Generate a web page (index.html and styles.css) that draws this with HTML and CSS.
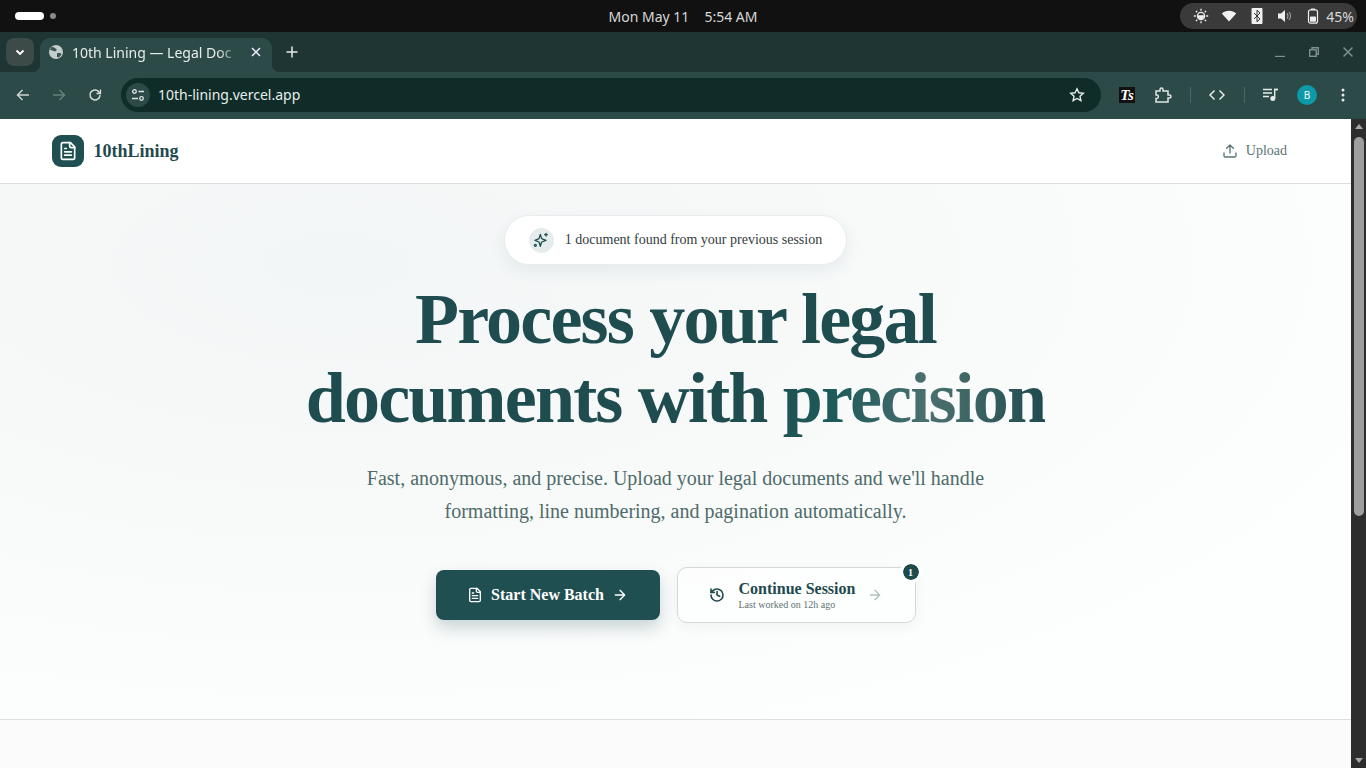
FILE: index.html
```html
<!DOCTYPE html>
<html lang="en">
<head>
  <meta charset="UTF-8">
  <title>10th Lining — Legal Documents</title>
  <link rel="stylesheet" href="styles.css">
</head>
<body>
  <!-- Desktop top bar -->
  <div class="os-bar">
    <div class="workspaces">
      <span class="ws-active"></span>
      <span class="ws-dot"></span>
    </div>
    <div class="clock"><span>Mon May 11</span><span>5:54 AM</span></div>
    <div class="tray">
      <svg class="tray-icon" viewBox="0 0 16 16" fill="none" stroke="#eee" stroke-width="1.3"><circle cx="8" cy="8" r="3.6"/><path d="M5.5 8a2.5 2.5 0 0 0 5 0z" fill="#eee"/><path d="M8 .8v2M8 13.2v2M.8 8h2M13.2 8h2M2.9 2.9l1.4 1.4M11.7 11.7l1.4 1.4M2.9 13.100l1.4-1.400M11.700 4.300l1.400-1.400"/></svg>
      <svg class="tray-icon" viewBox="0 0 16 16"><path d="M.8 5.500C2.800 3.700 5.200 2.800 8 2.800s5.200.9 7.200 2.700L8 13.500z" fill="#f2f2f2"/></svg>
      <svg class="tray-icon" viewBox="0 0 12 16"><rect x=".5" width="11" height="16" rx="1" fill="#f2f2f2"/><path d="M3 5l6 6-3 2.800V2.200L9 5l-6 6" fill="none" stroke="#333" stroke-width="1"/></svg>
      <svg class="tray-icon" viewBox="0 0 16 16"><path d="M1 5.500h3L8 2v12l-4-3.500H1z" fill="#eee"/><path d="M10 5.500a3.500 3.500 0 0 1 0 5M12 4a6 6 0 0 1 0 8" fill="none" stroke="#aaa" stroke-width="1.100"/></svg>
      <svg class="tray-icon" viewBox="0 0 12 16"><rect x="1.500" y="1.800" width="9" height="13.400" rx="2" fill="none" stroke="#eee" stroke-width="1.200"/><rect x="4" y=".5" width="4" height="1.500" fill="#eee"/><rect x="3" y="8.500" width="6" height="5.300" rx=".8" fill="#eee"/></svg>
      <span class="battery">45%</span>
    </div>
  </div>

  <!-- Browser tabs -->
  <div class="tab-strip">
    <div class="tab-search">
      <svg width="12" height="12" viewBox="0 0 12 12" fill="none" stroke="#fff" stroke-width="1.800"><path d="M2.500 4.500L6 8l3.500-3.500"/></svg>
    </div>
    <div class="tab">
      <svg width="16" height="16" viewBox="0 0 16 16"><circle cx="8" cy="8" r="7" fill="#c4cecc"/><path d="M4 2.500l3 1.500 2 2-2 1.500-3-1-2-1zM9 9l3.500 0 1 1.500L11 13.500 9 13z" fill="#3a5553"/></svg>
      <span class="tab-title">10th Lining — Legal Doc</span>
      <svg class="tab-close" width="10" height="10" viewBox="0 0 10 10" stroke="#eef" stroke-width="1.500"><path d="M1 1l8 8M9 1l-8 8"/></svg>
    </div>
    <svg class="new-tab" width="12" height="12" viewBox="0 0 12 12" stroke="#e6ecea" stroke-width="1.500"><path d="M6 .5v11M.5 6h11"/></svg>
    <div class="window-controls">
      <svg width="10" height="10" viewBox="0 0 10 10" stroke="#7d918f" stroke-width="1.400"><path d="M0 9.500h10"/></svg>
      <svg width="10" height="10" viewBox="0 0 10 10" fill="none" stroke="#7d918f" stroke-width="1.400"><rect x=".7" y="2.800" width="6.500" height="6.500"/><path d="M3 2.800V.7h6.300v6.500H7.200"/></svg>
      <svg width="10" height="10" viewBox="0 0 10 10" stroke="#7d918f" stroke-width="1.500"><path d="M.5.5l9 9M9.500.5l-9 9"/></svg>
    </div>
  </div>

  <!-- Browser toolbar -->
  <div class="toolbar">
    <div class="nav-buttons">
      <svg width="14" height="14" viewBox="0 0 14 14" fill="none" stroke="#c9d3d1" stroke-width="1.500"><path d="M13 7H1.500M6.500 2l-5 5 5 5"/></svg>
      <svg width="14" height="14" viewBox="0 0 14 14" fill="none" stroke="#64807c" stroke-width="1.500"><path d="M1 7h11.500M7.500 2l5 5-5 5"/></svg>
      <svg width="14" height="14" viewBox="0 0 14 14" fill="none" stroke="#d5dedc" stroke-width="1.500"><path d="M12 7a5 5 0 1 1-1.500-3.600L12 5"/><path d="M12.500 1.500v4h-4" stroke-width="1.300"/></svg>
    </div>
    <div class="omnibox">
      <span class="site-info">
        <svg width="14" height="14" viewBox="0 0 14 14" fill="none" stroke="#dfe6e4" stroke-width="1.300"><circle cx="3.500" cy="3.500" r="1.800"/><path d="M7.500 3.500H13M1 10.500h6"/><circle cx="10.500" cy="10.500" r="1.800"/></svg>
      </span>
      <span class="url">10th-lining.vercel.app</span>
      <svg class="star" width="16" height="16" viewBox="0 0 16 16" fill="none" stroke="#e6ecea" stroke-width="1.400"><path d="M8 1.800l1.900 4 4.400.5-3.300 3 .9 4.400L8 11.500l-3.900 2.200.9-4.400-3.300-3 4.400-.5z"/></svg>
    </div>
    <div class="ext-buttons">
      <span class="tool-slot"><span class="ts-badge">Ts</span></span>
      <span class="tool-slot">
        <svg width="18" height="18" viewBox="0 0 18 18" fill="none" stroke="#dfe6e4" stroke-width="1.500"><path d="M2 5h4V3.500a1.500 1.500 0 0 1 3 0V5h5v4h1.500a1.500 1.500 0 0 1 0 3H14v4H2v-3.500h1a1.800 1.800 0 0 0 0-3.500H2z"/></svg>
      </span>
      <span class="tool-sep"></span>
      <span class="tool-slot">
        <svg width="16" height="12" viewBox="0 0 16 12" fill="none" stroke="#e6ecea" stroke-width="1.500"><path d="M5.500 1.500L1 6l4.500 4.500M10.500 1.500L15 6l-4.500 4.500"/></svg>
      </span>
      <span class="tool-sep"></span>
      <span class="tool-slot">
        <svg width="16" height="14" viewBox="0 0 16 14"><path d="M0 1.500h9M0 5h9M0 8.500h6" stroke="#e6ecea" stroke-width="1.400"/><path d="M11 1.500h4" stroke="#e6ecea" stroke-width="1.800"/><path d="M11.700 1v9" stroke="#e6ecea" stroke-width="1.400"/><circle cx="9.800" cy="10.500" r="2.500" fill="#e6ecea"/></svg>
      </span>
      <span class="tool-slot"><span class="avatar">B</span></span>
      <span class="tool-slot">
        <svg width="4" height="14" viewBox="0 0 4 14" fill="#e6ecea"><circle cx="2" cy="2" r="1.500"/><circle cx="2" cy="7" r="1.500"/><circle cx="2" cy="12" r="1.500"/></svg>
      </span>
    </div>
  </div>

  <!-- Page -->
  <div class="viewport">
    <div class="page">
      <header class="site-header">
        <a class="brand">
          <span class="brand-mark">
            <svg width="20" height="20" viewBox="0 0 24 24" fill="none" stroke="#fff" stroke-width="2" stroke-linecap="round" stroke-linejoin="round"><path d="M15 2H6a2 2 0 0 0-2 2v16a2 2 0 0 0 2 2h12a2 2 0 0 0 2-2V7z"/><path d="M14 2v4a2 2 0 0 0 2 2h4M16 13H8M16 17H8M10 9H8"/></svg>
          </span>
          <span class="brand-name">10thLining</span>
        </a>
        <a class="upload-link">
          <svg width="16" height="16" viewBox="0 0 24 24" fill="none" stroke="currentColor" stroke-width="2" stroke-linecap="round" stroke-linejoin="round"><path d="M21 15v4a2 2 0 0 1-2 2H5a2 2 0 0 1-2-2v-4M17 8l-5-5-5 5M12 3v12"/></svg>
          Upload
        </a>
      </header>

      <section class="hero">
        <div class="session-pill">
          <span class="pill-icon">
            <svg width="16" height="16" viewBox="0 0 24 24" fill="none" stroke="#1f4f50" stroke-width="2" stroke-linecap="round" stroke-linejoin="round"><path d="M11 3.500l2 6.500 6.500 2.500-6.500 2.500-2 6.500-2-6.500-6-2.500 6-2.500z"/><path d="M19.500 2v4M17.500 4h4"/><circle cx="3.500" cy="20" r="1.500"/></svg>
          </span>
          1 document found from your previous session
        </div>

        <h1>Process your legal<br>documents with <span class="shimmer">precision</span></h1>

        <p class="lede">Fast, anonymous, and precise. Upload your legal documents and we'll handle<br>formatting, line numbering, and pagination automatically.</p>

        <div class="hero-actions">
          <button class="btn-primary">
            <svg width="16" height="16" viewBox="0 0 24 24" fill="none" stroke="#fff" stroke-width="2" stroke-linecap="round" stroke-linejoin="round"><path d="M15 2H6a2 2 0 0 0-2 2v16a2 2 0 0 0 2 2h12a2 2 0 0 0 2-2V7z"/><path d="M14 2v4a2 2 0 0 0 2 2h4M16 13H8M16 17H8M10 9H8"/></svg>
            Start New Batch
            <svg width="16" height="16" viewBox="0 0 24 24" fill="none" stroke="#fff" stroke-width="2" stroke-linecap="round" stroke-linejoin="round"><path d="M5 12h14M12 5l7 7-7 7"/></svg>
          </button>
          <button class="btn-session">
            <svg width="16" height="16" viewBox="0 0 24 24" fill="none" stroke="#1f4a4d" stroke-width="2.400" stroke-linecap="round" stroke-linejoin="round"><path d="M3 12a9 9 0 1 0 9-9 9.700 9.700 0 0 0-6.700 2.700L3 8"/><path d="M3 3v5h5M12 7v5l4 2"/></svg>
            <span class="session-text">
              <strong>Continue Session</strong>
              <small>Last worked on 12h ago</small>
            </span>
            <svg class="session-arrow" width="16" height="16" viewBox="0 0 24 24" fill="none" stroke="#b4bfbe" stroke-width="2" stroke-linecap="round" stroke-linejoin="round"><path d="M5 12h14M12 5l7 7-7 7"/></svg>
            <span class="count-badge">1</span>
          </button>
        </div>
      </section>

      <div class="below-fold"></div>
    </div>

    <div class="scrollbar">
      <span class="scroll-up"></span>
      <span class="scroll-track"><span class="scroll-thumb"></span></span>
      <span class="scroll-down"></span>
    </div>
  </div>
</body>
</html>
```

FILE: styles.css
```css
/* Base */
html, body {
  height: 100%;
  margin: 0;
  padding: 0;
}

body {
  display: flex;
  flex-direction: column;
  overflow: hidden;
  font-family: "Noto Sans", sans-serif;
  background: #fff;
}

/* Desktop top bar */
.os-bar {
  height: 32px;
  flex: none;
  display: grid;
  grid-template-columns: 1fr auto 1fr;
  align-items: center;
  background: #111111;
  color: #d8d8d8;
  font-size: 14px;
}

.workspaces {
  display: flex;
  align-items: center;
  gap: 6px;
  padding-left: 15px;
}

.ws-active {
  width: 29px;
  height: 8px;
  border-radius: 4px;
  background: #fff;
}

.ws-dot {
  width: 6px;
  height: 6px;
  border-radius: 50%;
  background: #8a8a8a;
}

.clock {
  display: flex;
  gap: 15px;
}

.tray {
  justify-self: end;
  height: 26px;
  margin-right: 9px;
  padding: 0 3px 0 13px;
  display: flex;
  align-items: center;
  gap: 12px;
  border-radius: 13px;
  background: #3a3a3a;
}

.tray-icon {
  height: 16px;
  width: 16px;
}

.battery {
  margin-left: -7px;
  color: #d8d8d8;
  font-size: 14px;
}

/* Tab strip */
.tab-strip {
  height: 40px;
  flex: none;
  display: flex;
  align-items: flex-end;
  background: #1f3533;
  color: #e6ecea;
}

.tab-search {
  width: 28px;
  height: 28px;
  margin: 0 6px 6px 6px;
  display: flex;
  align-items: center;
  justify-content: center;
  border-radius: 8px;
  background: #3c4a48;
}

.tab {
  position: relative;
  width: 232px;
  height: 34px;
  box-sizing: border-box;
  padding: 0 9px 6px 8px;
  display: flex;
  align-items: center;
  gap: 8px;
  border-radius: 10px 10px 0 0;
  background: #2c4a47;
  font-size: 14px;
}

.tab::before,
.tab::after {
  content: "";
  position: absolute;
  bottom: 0;
  width: 8px;
  height: 8px;
}

.tab::before {
  left: -8px;
  background: radial-gradient(circle at 0 0, transparent 8px, #2c4a47 8.5px);
}

.tab::after {
  right: -8px;
  background: radial-gradient(circle at 100% 0, transparent 8px, #2c4a47 8.5px);
}

.tab-title {
  flex: 1;
  overflow: hidden;
  white-space: nowrap;
  -webkit-mask-image: linear-gradient(to right, #000 85%, transparent);
  mask-image: linear-gradient(to right, #000 85%, transparent);
}

.tab-close {
  margin-right: 2px;
}

.new-tab {
  margin: 0 0 14px 14px;
}

.window-controls {
  margin-left: auto;
  padding: 0 13px 15px 0;
  display: flex;
  align-items: center;
  gap: 24px;
}

/* Toolbar */
.toolbar {
  height: 47px;
  flex: none;
  box-sizing: border-box;
  padding-bottom: 1px;
  display: flex;
  align-items: center;
  background: #2c4a47;
}

.nav-buttons {
  display: flex;
  align-items: center;
  gap: 22px;
  padding-left: 16px;
  width: 105px;
  box-sizing: border-box;
}

.omnibox {
  width: 980px;
  height: 34px;
  box-sizing: border-box;
  margin-left: 16px;
  padding: 0 16px 0 5px;
  display: flex;
  align-items: center;
  border-radius: 17px;
  background: #102c29;
  color: #e6ecea;
  font-size: 14px;
}

.site-info {
  width: 24px;
  height: 24px;
  display: flex;
  align-items: center;
  justify-content: center;
  border-radius: 50%;
  background: #2c4a47;
}

.url {
  margin-left: 8px;
  padding-bottom: 2px;
}

.star {
  margin-left: auto;
}

.ext-buttons {
  flex: 1;
  display: flex;
  align-items: center;
  padding-left: 8px;
}

.tool-slot {
  width: 36px;
  display: flex;
  align-items: center;
  justify-content: center;
}

.ts-badge {
  width: 16px;
  height: 16px;
  display: flex;
  align-items: center;
  justify-content: center;
  background: #111;
  color: #fff;
  font: italic 700 15px "Liberation Serif", serif;
}

.tool-sep {
  width: 1px;
  height: 16px;
  margin: 0 8px 0 9px;
  background: #4c6663;
}

.avatar {
  width: 20px;
  height: 20px;
  display: flex;
  align-items: center;
  justify-content: center;
  border-radius: 50%;
  background: #0d9aa8;
  color: #fff;
  font-size: 10px;
}

/* Page viewport */
.viewport {
  flex: 1;
  min-height: 0;
  display: flex;
}

.page {
  flex: 1;
  min-width: 0;
  display: flex;
  flex-direction: column;
  font-family: "Liberation Serif", serif;
  color: #1f4a4d;
}

.site-header {
  height: 64px;
  flex: none;
  box-sizing: content-box;
  padding: 0 64px 0 52px;
  display: flex;
  align-items: center;
  justify-content: space-between;
  background: #fff;
  border-bottom: 1px solid #dcdfdf;
}

.brand {
  display: flex;
  align-items: center;
  gap: 9.500px;
}

.brand-mark {
  width: 32px;
  height: 32px;
  display: flex;
  align-items: center;
  justify-content: center;
  border-radius: 9px;
  background: #1f4f50;
}

.brand-name {
  font-size: 18px;
  font-weight: 700;
}

.upload-link {
  display: flex;
  align-items: center;
  gap: 8px;
  color: #5a7473;
  font-size: 14px;
}

/* Hero */
.hero {
  height: 536px;
  flex: none;
  box-sizing: border-box;
  padding-top: 31px;
  display: flex;
  flex-direction: column;
  align-items: center;
  background:
    radial-gradient(ellipse 85% 95% at 25% 15%, #f3f6f6 0%, rgba(246, 248, 248, 0.7) 50%, rgba(255, 255, 255, 0) 100%),
    #fdfefe;
  border-bottom: 1px solid #dcdfdf;
}

.session-pill {
  height: 50px;
  box-sizing: border-box;
  padding: 0 24px;
  display: flex;
  align-items: center;
  gap: 11px;
  border: 1px solid #e8ecec;
  border-radius: 25px;
  background: #fff;
  box-shadow: 0 6px 16px rgba(31, 74, 77, 0.08);
  color: #333d3d;
  font-size: 14px;
}

.pill-icon {
  width: 25px;
  height: 25px;
  display: flex;
  align-items: center;
  justify-content: center;
  border-radius: 50%;
  background: #e6ecec;
}

h1 {
  margin: 15px 0 0;
  font-size: 72px;
  font-weight: 700;
  line-height: 79px;
  letter-spacing: -1.800px;
  text-align: center;
  color: #1f4d4f;
}

.shimmer {
  background: linear-gradient(90deg, #1f5253 0%, #1f5a5a 20%, #4b6f6f 55%, #406666 70%, #1f4a4f 100%);
  -webkit-background-clip: text;
  background-clip: text;
  color: transparent;
}

.lede {
  margin: 24px 0 0;
  font-size: 20px;
  line-height: 33px;
  text-align: center;
  color: #4f6b6a;
}

.hero-actions {
  margin-top: 39px;
  display: flex;
  align-items: center;
  gap: 17px;
}

.btn-primary {
  width: 224px;
  height: 50px;
  display: flex;
  align-items: center;
  justify-content: center;
  gap: 8px;
  border: none;
  border-radius: 8px;
  background: #1f4f50;
  box-shadow: 0 8px 16px rgba(31, 74, 77, 0.22);
  color: #fff;
  font: 700 16px "Liberation Serif", serif;
}

.btn-session {
  position: relative;
  width: 239px;
  height: 56px;
  padding: 0 0 0 31px;
  display: flex;
  align-items: center;
  gap: 14px;
  border: 1px solid #d3d9d9;
  border-radius: 10px;
  background: rgba(255, 255, 255, 0.6);
  box-shadow: 0 4px 12px rgba(31, 74, 77, 0.05);
  font-family: "Liberation Serif", serif;
  text-align: left;
}

.session-text {
  display: flex;
  flex-direction: column;
}

.session-text strong {
  color: #1f4a4d;
  font-size: 16px;
  line-height: 18px;
}

.session-text small {
  color: #5f7271;
  font-size: 10px;
  line-height: 13px;
}

.session-arrow {
  margin-left: -2px;
}

.count-badge {
  position: absolute;
  top: -4px;
  right: -4px;
  width: 16px;
  height: 16px;
  display: flex;
  align-items: center;
  justify-content: center;
  border-radius: 50%;
  outline: 3px solid #fff;
  background: #1f4a4d;
  color: #fff;
  font-size: 10px;
  font-weight: 700;
}

.below-fold {
  flex: 1;
  background: #fbfbfb;
}

/* Page scrollbar */
.scrollbar {
  width: 15px;
  flex: none;
  display: flex;
  flex-direction: column;
  align-items: center;
  background: #2d2d2d;
}

.scroll-up,
.scroll-down {
  flex: none;
  margin: 5px 0;
  width: 0;
  height: 0;
  border-left: 4px solid transparent;
  border-right: 4px solid transparent;
}

.scroll-up {
  border-bottom: 5px solid #a6a6a6;
}

.scroll-down {
  border-top: 5px solid #a6a6a6;
}

.scroll-track {
  flex: 1;
  width: 100%;
  display: flex;
  justify-content: center;
  padding-top: 3px;
}

.scroll-thumb {
  width: 10px;
  height: 379px;
  border-radius: 5px;
  background: #9e9e9e;
}
```
